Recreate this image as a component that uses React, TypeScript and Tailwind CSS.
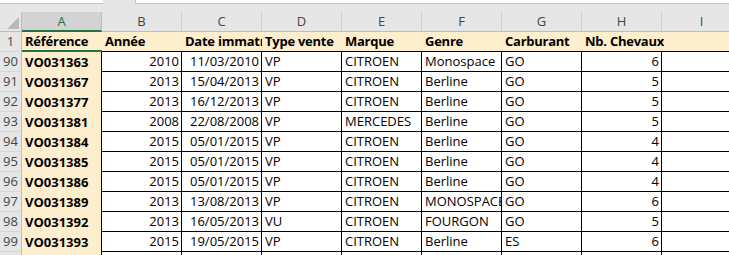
const letters = ["A", "B", "C", "D", "E", "F", "G", "H", "I"];
const headers = ["Référence", "Année", "Date immatr", "Type vente", "Marque", "Genre", "Carburant", "Nb. Chevaux"];

const rows: [number | string, string, string, string, string, string, string, string, string][] = [
  [90, "VO031363", "2010", "11/03/2010", "VP", "CITROEN", "Monospace", "GO", "6"],
  [91, "VO031367", "2013", "15/04/2013", "VP", "CITROEN", "Berline", "GO", "5"],
  [92, "VO031377", "2013", "16/12/2013", "VP", "CITROEN", "Berline", "GO", "5"],
  [93, "VO031381", "2008", "22/08/2008", "VP", "MERCEDES", "Berline", "GO", "5"],
  [94, "VO031384", "2015", "05/01/2015", "VP", "CITROEN", "Berline", "GO", "4"],
  [95, "VO031385", "2015", "05/01/2015", "VP", "CITROEN", "Berline", "GO", "4"],
  [96, "VO031386", "2015", "05/01/2015", "VP", "CITROEN", "Berline", "GO", "4"],
  [97, "VO031389", "2013", "13/08/2013", "VP", "CITROEN", "MONOSPACE", "GO", "6"],
  [98, "VO031392", "2013", "16/05/2013", "VU", "CITROEN", "FOURGON", "GO", "5"],
  [99, "VO031393", "2015", "19/05/2015", "VP", "CITROEN", "Berline", "ES", "6"],
];

const rightCols = [1, 2, 7];

function RowHead({ n }: { n: number | string }) {
  return (
    <div className="w-[22px] shrink-0 h-full bg-[#e6e6e6] border-r border-b border-r-[#bdbdbd] border-b-[#d6d6d6] text-center text-[#444] font-normal tracking-normal leading-[19px]">
      {n}
    </div>
  );
}

function DataRow({ r }: { r: (typeof rows)[number] }) {
  const [n, ...cells] = r;
  return (
    <div className="flex h-[20px]">
      <RowHead n={n} />
      <div className="w-[80px] shrink-0 bg-[#fdeecd] border-r border-black pl-[3px] font-bold leading-[20px] whitespace-nowrap overflow-hidden">
        {cells[0]}
      </div>
      {cells.slice(1).map((c, i) => (
        <div
          key={i}
          className={`w-[80px] shrink-0 border-r border-b border-black leading-[19px] whitespace-nowrap overflow-hidden ${
            rightCols.includes(i + 1) ? "text-right pr-[2px]" : "pl-[3px]"
          }`}
        >
          {c}
        </div>
      ))}
      <div className="flex-1 border-b border-black" />
    </div>
  );
}

export default function App() {
  return (
    <div className="w-[729px] h-[255px] overflow-hidden bg-white text-[13px] text-black font-['Open_Sans',sans-serif]">
      {/* formula bar remnants */}
      <div className="flex h-[4px] bg-[#e6e6e6]">
        <div className="w-[103px] bg-white border-b border-[#c6c6c6]" />
        <div className="w-[32px]" />
        <div className="flex-1 bg-white border-b border-l border-[#c6c6c6]" />
      </div>
      <div className="h-[8px] bg-[#e6e6e6]" />

      {/* column letters */}
      <div className="flex h-[20px] bg-[#e6e6e6] text-[#444]">
        <div className="w-[22px] shrink-0 border-r border-b border-[#bdbdbd] flex items-end justify-end p-[2px]">
          <svg width="12" height="12" viewBox="0 0 12 12">
            <polygon points="12,0 12,12 0,12" fill="#b9b9b9" />
          </svg>
        </div>
        {letters.map((l, i) =>
          i === 0 ? (
            <div key={l} className="w-[80px] shrink-0 bg-[#d3d3d3] border-r border-[#bdbdbd] border-b-2 border-b-[#217346] text-center text-[#217346] leading-[19px]">
              {l}
            </div>
          ) : (
            <div key={l} className="w-[80px] shrink-0 border-r border-b border-r-[#cfcfcf] border-b-[#bdbdbd] text-center leading-[19px]">
              {l}
            </div>
          )
        )}
      </div>

      {/* header row 1 */}
      <div className="flex h-[20px] bg-[#fdeecd] font-bold tracking-[-0.25px]">
        <RowHead n={1} />
        <div className="w-[80px] shrink-0 border-b-2 border-[#217346] pl-[3px] leading-[19px] whitespace-nowrap overflow-hidden">
          {headers[0]}
        </div>
        {headers.slice(1).map((h, i) => (
          <div
            key={h}
            className={`w-[80px] shrink-0 border-b border-black pl-[3px] leading-[19px] whitespace-nowrap ${
              i === headers.length - 2 ? "overflow-visible" : "overflow-hidden"
            }`}
          >
            {h}
          </div>
        ))}
        <div className="flex-1 border-b border-black" />
      </div>

      {rows.map((r) => (
        <DataRow key={r[0]} r={r} />
      ))}
      {/* row 100, only its top edge shows */}
      <DataRow r={["", "", "", "", "", "", "", "", ""]} />
    </div>
  );
}
